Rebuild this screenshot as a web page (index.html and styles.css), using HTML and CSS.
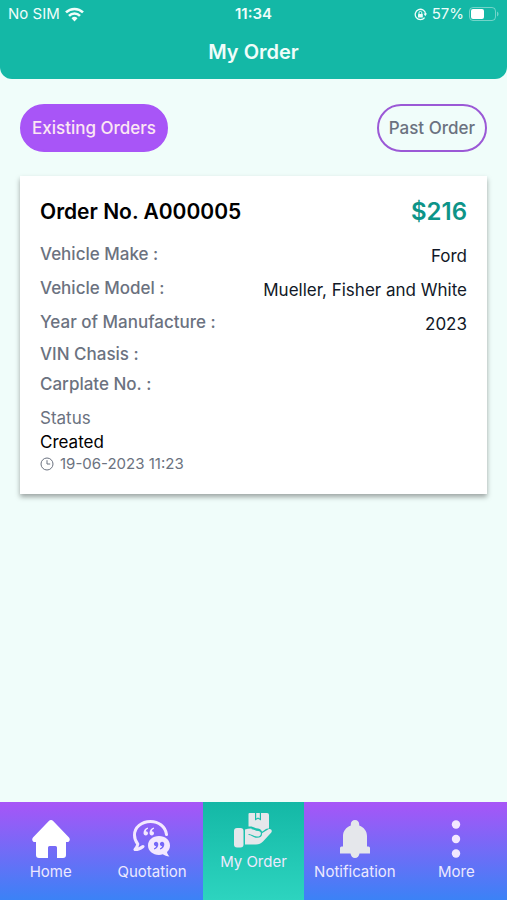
FILE: index.html
```html
<!DOCTYPE html>
<html lang="en">
  <head>
    <meta charset="UTF-8" />
    <meta name="viewport" content="width=device-width, initial-scale=1.0" />
    <title>My Order</title>
    <link rel="stylesheet" href="styles.css">
  </head>
  <body>
    <header class="header">
      <div class="statusbar">
        <div class="carrier">
          <span>No SIM</span>
          <svg width="19" height="15" viewBox="0 0 19 15" fill="none" stroke="currentColor" stroke-width="2.6">
            <path d="M1 5.4a12.2 12.2 0 0 1 17 0" />
            <path d="M4 8.8a7.8 7.8 0 0 1 11 0" />
            <path d="M9.5 14.4 6.5 11.3a4.3 4.3 0 0 1 6 0z" fill="currentColor" stroke="none" />
          </svg>
        </div>
        <strong class="time">11:34</strong>
        <div class="battery">
          <svg width="13" height="13" viewBox="0 0 13 13" fill="none" stroke="currentColor">
            <path d="M10.6 9.6A5.2 5.2 0 1 1 11.6 6" stroke-width="1.3" />
            <path d="M9.6 5.6h3.4l-1.7 2.6z" fill="currentColor" stroke="none" />
            <rect x="4" y="6" width="4.8" height="3.4" rx=".5" fill="currentColor" stroke="none" />
            <path d="M5 6V4.8a1.4 1.4 0 0 1 2.8 0V6" />
          </svg>
          <span>57%</span>
          <svg width="30" height="14" viewBox="0 0 30 14">
            <rect x=".5" y=".5" width="26" height="13" rx="3.5" fill="none" stroke="#fff" stroke-opacity=".4" />
            <rect x="2" y="2" width="13" height="10" rx="2" fill="#fff" />
            <path d="M28 4.5c2 .8 2 4.2 0 5z" fill="#fff" fill-opacity=".4" />
          </svg>
        </div>
      </div>
      <h1 class="title">My Order</h1>
    </header>

    <main class="content">
      <div class="tabs">
        <button class="tab active">Existing Orders</button>
        <button class="tab">Past Order</button>
      </div>

      <section class="card">
        <div class="card-head">
          <h2>Order No. A000005</h2>
          <span class="price">$216</span>
        </div>
        <dl class="details">
          <div class="row"><dt>Vehicle Make :</dt><dd>Ford</dd></div>
          <div class="row"><dt>Vehicle Model :</dt><dd>Mueller, Fisher and White</dd></div>
          <div class="row"><dt>Year of Manufacture :</dt><dd>2023</dd></div>
          <div class="row"><dt>VIN Chasis :</dt></div>
          <div class="row"><dt>Carplate No. :</dt></div>
        </dl>
        <div class="status-label">Status</div>
        <div class="status">Created</div>
        <div class="date">
          <svg width="14" height="14" viewBox="0 0 14 14" fill="none" stroke="currentColor">
            <circle cx="7" cy="7" r="6" />
            <path d="M7 3.2V7h3.2" />
          </svg>
          <span>19-06-2023 11:23</span>
        </div>
      </section>
    </main>

    <nav class="nav">
      <a href="#home" class="nav-item">
        <svg width="38" height="38" viewBox="0 0 38 38" fill="#fff">
          <path d="M16.6 1.2a3.4 3.4 0 0 1 4.8 0L37 17.4c1.6 1.8.6 4.6-1.8 4.6H34v13a3 3 0 0 1-3 3h-6V27.5a1.5 1.5 0 0 0-1.5-1.5h-6a1.5 1.5 0 0 0-1.500 1.5V38H7a3 3 0 0 1-3-3V22H2.800C.4 22-.6 19.200 1 17.400z" />
        </svg>
        <span>Home</span>
      </a>
      <a href="#quotation" class="nav-item">
        <svg width="38" height="38" viewBox="0 0 38 38" fill="none">
          <path d="M33.5 14.5C32.5 6.500 25.5 1.500 17.500 1.500 8.500 1.500 1.500 7.500 1.500 15c0 4 1.500 7 3.300 9-.2 2-1.500 4-2.800 5.500 3.500 0 6-1.300 8-3" stroke="#f3e8ff" stroke-width="3" stroke-linecap="round" stroke-linejoin="round" />
          <g fill="#f3e8ff">
            <path d="M15 7.500c-3 .8-4.500 3-4.500 5.500 0 1.500 1 2.500 2.300 2.500s2.200-1 2.200-2.200-1-2.200-2.200-2.100c.2-1.200 1-2 2.200-2.500z" />
            <path d="M21 7.500c-3 .8-4.500 3-4.500 5.500 0 1.500 1 2.500 2.300 2.500s2.200-1 2.200-2.200-1-2.200-2.200-2.100c.2-1.200 1-2 2.200-2.500z" />
            <path d="M26 16c6.300 0 11 4 11 9.500 0 2.800-1.200 5-3 6.600.2 1.600 1.200 3.100 2.500 4.400-2.800 0-5-1-6.700-2.200-1.200.4-2.500.6-3.800.6-6.300 0-11-4-11-9.400S19.700 16 26 16z" />
          </g>
          <g fill="#7568f8">
            <path d="M21 29.500c3-.8 4.300-2.800 4.300-5.300 0-1.500-1-2.400-2.200-2.400s-2.200 1-2.200 2.100 1 2.200 2.200 2.100c-.2 1.100-1 1.900-2.100 2.300z" />
            <path d="M27 29.500c3-.8 4.300-2.800 4.300-5.300 0-1.500-1-2.400-2.200-2.400s-2.200 1-2.200 2.100 1 2.200 2.200 2.100c-.2 1.100-1 1.900-2.100 2.300z" />
          </g>
        </svg>
        <span>Quotation</span>
      </a>
      <a href="#order" class="nav-item current">
        <svg width="38" height="36" viewBox="0 0 38 36" fill="#e5e7eb">
          <path d="M15.500 1h5.500v7.500l3-1.800 3 1.800V1h6a2 2 0 0 1 2 2v13.500c-2.500-.5-4.500 1.500-7 3.300-1-2.800-3-3.500-6-3.600-3.200-1.700-4.500-2-7.500-1.700V2a1 1 0 0 1 1-1z" />
          <path d="M22.200 1h3.600v5.500L24 5.500l-1.800 1z" />
          <rect x="0" y="16" width="9.500" height="19.500" rx="3" />
          <path d="M11 17.500c5-1.700 8-1.300 11.500.7 3 0 5 .8 5 3.300l6.500-4c2.500-1.300 4.800.8 3.300 3L29 29.500c-2 2-4 3-7 3H11z" />
          <path d="M15 22.500c3 .2 4.500 2.700 8 2.700 2.700 0 4.500-1.200 4.500-3.700 0-2.300-2-3.300-5-3.300-1.500-.9-3-1.400-4.500-1.600" fill="none" stroke="#1fc0ae" stroke-width="1.2" stroke-linecap="round" />
        </svg>
        <span>My Order</span>
      </a>
      <a href="#notification" class="nav-item">
        <svg width="38" height="38" viewBox="0 0 38 38" fill="#e5e7eb">
          <path d="M19 0c2.500 0 4.200 1.700 4.200 4v1.400C28 7.300 31 11 31 16v10.500h1.500a1.500 1.500 0 0 1 1.500 1.500v5.500H23.500c-.4 2.700-2 4.500-4.500 4.500s-4.100-1.800-4.500-4.500H4V28a1.500 1.500 0 0 1 1.500-1.500H7V16c0-5 3-8.700 7.800-10.600V4c0-2.300 1.700-4 4.200-4z" />
        </svg>
        <span>Notification</span>
      </a>
      <a href="#more" class="nav-item">
        <svg width="38" height="38" viewBox="0 0 38 38" fill="#f3e8ff">
          <circle cx="19" cy="4.500" r="4.200" />
          <circle cx="19" cy="19" r="4.200" />
          <circle cx="19" cy="33.500" r="4.200" />
        </svg>
        <span>More</span>
      </a>
    </nav>
  </body>
</html>
```
FILE: styles.css
```css
* {
  box-sizing: border-box;
  margin: 0;
  padding: 0;
}
body {
  min-height: 100vh;
  display: flex;
  flex-direction: column;
  background-color: #f0fdfa;
  font-family: Inter, "Liberation Sans", sans-serif;
  font-size: 17px;
  line-height: 24px;
}

.header {
  background-color: #14b8a6;
  color: #f0fdfa;
  border-radius: 0 0 12px 12px;
  padding-bottom: 11px;
}
.statusbar {
  display: grid;
  grid-template-columns: 1fr auto 1fr;
  align-items: center;
  height: 28px;
  padding: 0 8px;
  font-size: 15px;
}
.carrier,
.battery {
  display: flex;
  align-items: center;
  gap: 5px;
}
.battery {
  justify-content: flex-end;
}
.time {
  font-weight: 600;
}
.title {
  padding-top: 8px;
  text-align: center;
  font-size: 20px;
  font-weight: 600;
  line-height: 32px;
}

.content {
  flex: 1;
  padding: 25px 20px;
}
.tabs {
  display: flex;
  justify-content: space-between;
  margin-bottom: 24px;
}
.tab {
  height: 48px;
  padding: 0 10px;
  border: 2px solid #9b59d6;
  border-radius: 24px;
  background-color: transparent;
  color: #6b7280;
  font-family: inherit;
  font-size: 17px;
  font-weight: 500;
}
.tab.active {
  border-color: #a855f7;
  background-color: #a855f7;
  color: #fce7f3;
}

.card {
  padding: 20px;
  background-color: #fff;
  box-shadow: 0 3px 5px rgba(0, 0, 0, 0.35);
}
.card-head {
  display: flex;
  justify-content: space-between;
  align-items: center;
  height: 32px;
  margin-bottom: 12px;
}
.card-head h2 {
  font-size: 21px;
  font-weight: 600;
  color: #000;
}
.price {
  font-size: 24px;
  font-weight: 600;
  color: #0d9488;
}
.row {
  display: flex;
  justify-content: space-between;
  align-items: center;
  margin-bottom: 6px;
}
.row dt {
  font-weight: 500;
  color: #6b7280;
}
.row dd {
  padding-top: 4px;
  color: #111827;
}
.status-label {
  padding-top: 4px;
  color: #6b7280;
}
.status {
  color: #000;
}
.date {
  display: flex;
  align-items: center;
  gap: 6px;
  height: 20px;
  font-size: 15px;
  color: #6b7280;
}

.nav {
  display: grid;
  grid-template-columns: repeat(5, 1fr);
  height: 98px;
  background-image: linear-gradient(#a855f7, #3b82f6);
}
.nav-item {
  display: flex;
  flex-direction: column;
  align-items: center;
  gap: 2px;
  padding-top: 18px;
  color: #ede9fe;
  font-size: 15px;
  text-decoration: none;
}
.nav-item.current {
  padding-top: 10px;
  background-image: linear-gradient(#14b8a6, #2dd4bf);
}
```
